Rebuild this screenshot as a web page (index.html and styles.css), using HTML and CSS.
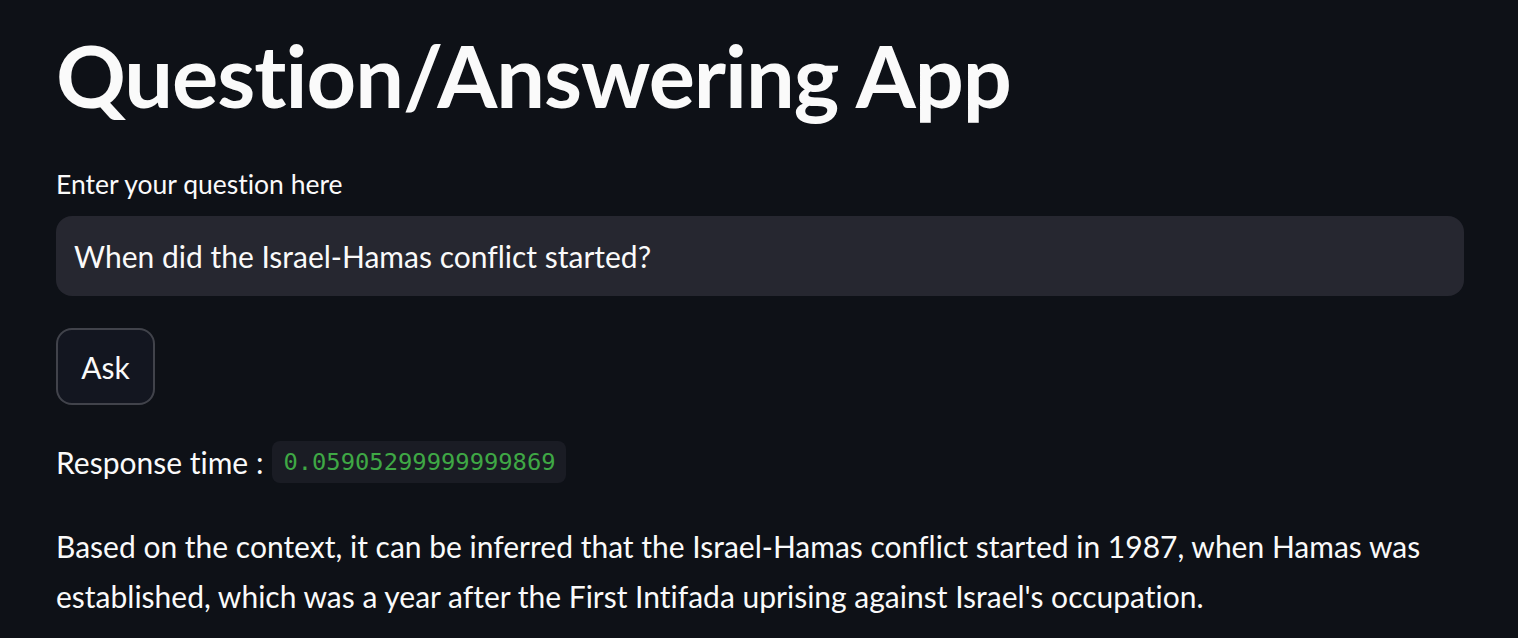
FILE: index.html
```html
<!DOCTYPE html>
<html>
<head>
<meta charset="utf-8">
<link rel="stylesheet" href="styles.css">
</head>
<body>
<main class="app">
  <h1 class="title">Question/Answering App</h1>
  <label class="label" for="q">Enter your question here</label>
  <div class="input-box"><span class="input-text" id="q">When did the Israel-Hamas conflict started?</span></div>
  <button class="btn">Ask</button>
  <p class="resp">Response time : <code class="code">0.05905299999999869</code></p>
  <p class="answer">Based on the context, it can be inferred that the Israel-Hamas conflict started in 1987, when Hamas was established, which was a year after the First Intifada uprising against Israel's occupation.</p>
</main>
</body>
</html>
```
FILE: styles.css
```css
html, body {
  margin: 0;
  padding: 0;
  background: #0e1117;
  color: #fafafa;
  font-family: Lato, "Noto Sans", sans-serif;
  font-variant-ligatures: none;
}
.app {
  padding: 0 54px 0 56px;
  display: flex;
  flex-direction: column;
  align-items: flex-start;
}
.title {
  margin: 20px 0 0 0;
  font-size: 86.5px;
  font-weight: 700;
  line-height: 110px;
  letter-spacing: -1px;
}
.label {
  margin-top: 38px;
  font-size: 26.5px;
  line-height: 32px;
}
.input-box {
  margin-top: 16px;
  width: 1408px;
  height: 80px;
  box-sizing: border-box;
  background: #262730;
  border-radius: 16px;
  display: flex;
  align-items: center;
  padding-left: 18px;
}
.input-text {
  font-size: 30px;
}
.btn {
  margin-top: 32px;
  width: 99px;
  height: 77px;
  background: #131620;
  color: #fafafa;
  border: 2px solid rgba(250,250,250,0.2);
  border-radius: 16px;
  font-family: inherit;
  font-size: 30px;
  font-variant-ligatures: none;
}
.resp {
  margin: 34px 0 0 0;
  font-size: 30px;
  line-height: 46px;
  display: flex;
  align-items: center;
}
.code {
  margin-left: 9px;
  font-family: "DejaVu Sans Mono", monospace;
  font-size: 23.8px;
  line-height: 26px;
  color: #3fa845;
  background: #1a1c24;
  border-radius: 8px;
  padding: 8px 10px 8px 11px;
}
.answer {
  margin: 36px 0 0 0;
  font-size: 30px;
  line-height: 50px;
  width: 1420px;
}
```
